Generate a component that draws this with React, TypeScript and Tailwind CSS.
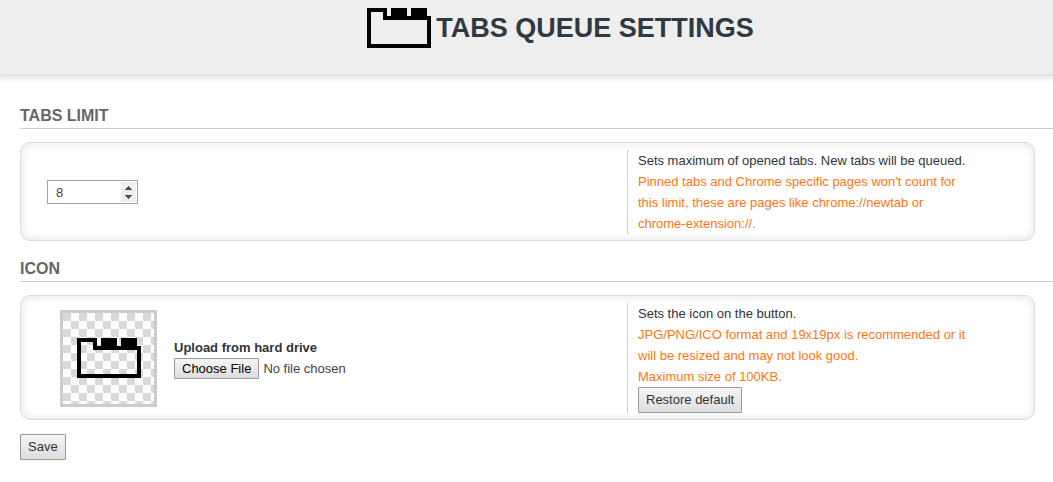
import { useRef, useState, type ReactNode } from "react";

function TabsIcon({ className }: { className?: string }) {
  return (
    <svg
      width="64"
      height="40"
      viewBox="0 0 64 40"
      fill="#000"
      shapeRendering="crispEdges"
      aria-hidden="true"
      className={className}
    >
      <path
        fillRule="evenodd"
        d="M0 0H20V8H24V0H40V8H44V0H60V8H64V40H0ZM4 4V36H60V12H16V4Z"
      />
    </svg>
  );
}

const buttonClass =
  "h-[26px] rounded-[1px] border border-[#999] bg-linear-to-b from-[#f6f6f6] to-[#dddddd] px-[7px] text-[13px] leading-5 text-[#333]";

function Section({
  title,
  help,
  children,
}: {
  title: string;
  help: ReactNode;
  children: ReactNode;
}) {
  return (
    <section>
      <h2 className="border-b border-[#ccc] pb-0.5 text-[16px] leading-5 font-bold text-[#666] uppercase">
        {title}
      </h2>
      <div className="mt-[13px] mr-[18px] grid grid-cols-[3fr_2fr] rounded-[10px] border border-[#dcdcdc] pt-[7px] pr-[3px] pb-1.5 shadow-[inset_0_0_10px_#e0e0e0]">
        <div className="flex items-center">{children}</div>
        <div className="border-l border-[#ccc] pr-[60px] pl-2.5">{help}</div>
      </div>
    </section>
  );
}

export default function App() {
  const [limit, setLimit] = useState(8);
  const fileRef = useRef<HTMLInputElement>(null);

  return (
    <div className="font-['Liberation_Sans',Arial,sans-serif] text-[13px] leading-[21px] text-[#2f3439]">
      <header className="border-b border-[#ddd] bg-[#eee] pt-2 pb-[26px] shadow-[0_0_6px_3px_#e0e0e0]">
        <h1 className="flex items-center justify-center gap-[5px] pl-[68px] text-[27px] leading-10 font-bold text-[#2f3942] uppercase">
          <TabsIcon />
          Tabs Queue Settings
        </h1>
      </header>

      <form className="pt-[31px] pl-5" onSubmit={(e) => e.preventDefault()}>
        <div className="flex flex-col gap-[18px]">
          <Section
            title="Tabs limit"
            help={
              <>
                <p>Sets maximum of opened tabs. New tabs will be queued.</p>
                <p className="text-[#ff7514]">
                  Pinned tabs and Chrome specific pages won't count for this
                  limit, these are pages like chrome://newtab or
                  chrome-extension://.
                </p>
              </>
            }
          >
            <div className="ml-[26px] flex h-6 w-[91px] border border-[#a5a5a5] bg-white p-px">
              <input
                type="number"
                aria-label="Tabs limit"
                min={1}
                value={limit}
                onChange={(e) => setLimit(Number(e.target.value))}
                className="min-w-0 flex-1 [appearance:textfield] pl-[7px] text-[13px] text-[#444] outline-none [&::-webkit-inner-spin-button]:appearance-none"
              />
              <div className="flex w-[15px] flex-col bg-[#f0f0f0]">
                <button
                  type="button"
                  aria-label="Increase limit"
                  onClick={() => setLimit(limit + 1)}
                  className="flex flex-1 items-end justify-center pb-0.5"
                >
                  <svg width="7" height="4" viewBox="0 0 7 4" fill="#505050" shapeRendering="crispEdges">
                    <path d="M3 0H4V1H5V2H6V3H7V4H0V3H1V2H2V1H3Z" />
                  </svg>
                </button>
                <button
                  type="button"
                  aria-label="Decrease limit"
                  onClick={() => setLimit(Math.max(1, limit - 1))}
                  className="flex flex-1 items-start justify-center pt-[3px]"
                >
                  <svg width="7" height="4" viewBox="0 0 7 4" fill="#505050" shapeRendering="crispEdges">
                    <path d="M0 0H7V1H6V2H5V3H4V4H3V3H2V2H1V1H0Z" />
                  </svg>
                </button>
              </div>
            </div>
          </Section>

          <Section
            title="Icon"
            help={
              <>
                <p>Sets the icon on the button.</p>
                <p className="text-[#ff7514]">
                  JPG/PNG/ICO format and 19x19px is recommended or it will be
                  resized and may not look good.
                  <br />
                  Maximum size of 100KB.
                </p>
                <button
                  type="button"
                  className={`${buttonClass} block`}
                  onClick={() => {
                    if (fileRef.current) fileRef.current.value = "";
                  }}
                >
                  Restore default
                </button>
              </>
            }
          >
            <div className="ml-[39px] flex size-[97px] items-center justify-center border-[3px] border-[#ccc] bg-[repeating-conic-gradient(#d8d8d8_0_25%,#ffffff_0_50%)] bg-[size:16px_16px] bg-[position:8px_0px]">
              <TabsIcon />
            </div>
            <div className="ml-[17px]">
              <label htmlFor="icon-file" className="block font-bold">
                Upload from hard drive
              </label>
              <input
                ref={fileRef}
                id="icon-file"
                type="file"
                accept=".jpg,.png,.ico"
                className="block w-[240px] text-[13px] leading-[21px] text-[#444] file:mr-1 file:h-[21px] file:rounded-[1px] file:border file:border-solid file:border-[#999] file:bg-linear-to-b file:from-[#f6f6f6] file:to-[#dddddd] file:px-[7px] file:text-[13px] file:leading-[19px] file:text-black"
              />
            </div>
          </Section>
        </div>
        <button type="submit" className={`${buttonClass} mt-[14px]`}>
          Save
        </button>
      </form>
    </div>
  );
}
